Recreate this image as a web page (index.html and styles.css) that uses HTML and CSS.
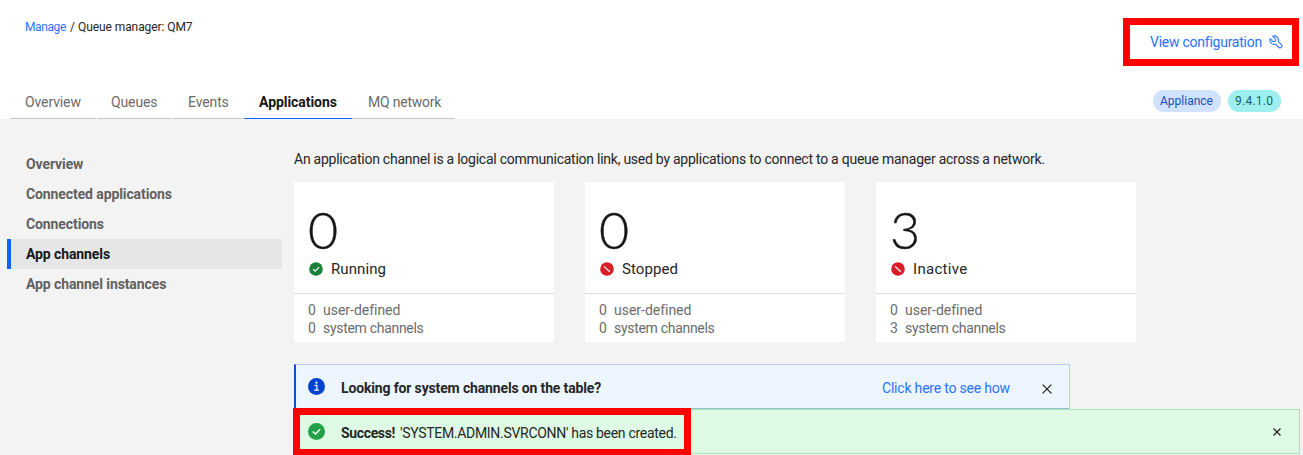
FILE: index.html
```html
<!DOCTYPE html>
<html lang="en">
<head>
<meta charset="utf-8">
<title>Queue manager: QM7</title>
<link rel="stylesheet" href="styles.css">
</head>
<body>
<header class="header">
  <div class="header-top">
    <nav class="breadcrumb"><a class="crumb-link">Manage</a><span class="crumb-sep">/</span><span class="crumb-current">Queue manager: QM7</span></nav>
    <div class="config-box">
      <span class="config-label">View configuration</span>
      <svg class="wrench" viewBox="0 0 32 32" fill="none" stroke="currentColor" stroke-width="2.4" stroke-linejoin="round"><path d="M8.5 2.6 A10 10 0 0 1 21.2 15.2 L28.6 22.4 A4.4 4.4 0 0 1 22.4 28.6 L15.2 21.2 A10 10 0 0 1 2.6 8.5 L8 13.8 A4.1 4.1 0 0 0 13.8 8 Z"/></svg>
    </div>
  </div>
  <div class="header-bottom">
    <nav class="tabs">
      <a class="tab tab-overview">Overview</a>
      <a class="tab tab-queues">Queues</a>
      <a class="tab tab-events">Events</a>
      <a class="tab tab-applications active">Applications</a>
      <a class="tab tab-network">MQ network</a>
    </nav>
    <div class="tags"><span class="tag tag-blue">Appliance</span><span class="tag tag-teal">9.4.1.0</span></div>
  </div>
</header>
<div class="body">
  <nav class="sidebar">
    <a class="side-item s1">Overview</a>
    <a class="side-item s2">Connected applications</a>
    <a class="side-item s3">Connections</a>
    <a class="side-item s4 selected">App channels</a>
    <a class="side-item s5">App channel instances</a>
  </nav>
  <main class="main">
    <p class="intro"><span>An application channel is a logical communication link, used by applications to connect to a queue manager across a network.</span></p>
    <section class="cards">
      <article class="card">
        <div class="card-top">
          <div class="count">0</div>
          <div class="status"><svg class="dot" viewBox="0 0 14 14"><circle cx="7" cy="7" r="6.8" fill="#198038"/><path d="M4 7.1 6.2 9.2 10.1 5.2" fill="none" stroke="#fff" stroke-width="1.2"/></svg><span class="st-running">Running</span></div>
        </div>
        <div class="card-bottom"><div><b>0</b><span class="ud">user-defined</span></div><div><b>0</b><span class="sc">system channels</span></div></div>
      </article>
      <article class="card">
        <div class="card-top">
          <div class="count">0</div>
          <div class="status"><svg class="dot" viewBox="0 0 14 14"><circle cx="7" cy="7" r="6.8" fill="#da1e28"/><path d="M4 4.4 9.8 9.8" stroke="#fff" stroke-width="1.2"/></svg><span class="st-stopped">Stopped</span></div>
        </div>
        <div class="card-bottom"><div><b>0</b><span class="ud">user-defined</span></div><div><b>0</b><span class="sc">system channels</span></div></div>
      </article>
      <article class="card">
        <div class="card-top">
          <div class="count">3</div>
          <div class="status"><svg class="dot" viewBox="0 0 14 14"><circle cx="7" cy="7" r="6.8" fill="#da1e28"/><path d="M4 4.4 9.8 9.8" stroke="#fff" stroke-width="1.2"/></svg><span class="st-inactive">Inactive</span></div>
        </div>
        <div class="card-bottom"><div><b>0</b><span class="ud">user-defined</span></div><div><b>3</b><span class="sc">system channels</span></div></div>
      </article>
    </section>
    <section class="notice info">
      <svg class="notice-icon" viewBox="0 0 17 17"><circle cx="8.5" cy="8.5" r="8.5" fill="#0043ce"/><circle cx="8.4" cy="4.7" r="1.1" fill="#fff"/><path d="M6.6 7.4H8.9V12M6.2 12.2H11" fill="none" stroke="#fff" stroke-width="1.2"/></svg>
      <strong class="info-title">Looking for system channels on the table?</strong>
      <a class="info-link">Click here to see how</a>
      <svg class="close close-info" viewBox="0 0 10 10"><path d="M.6.6 9.4 9.4M9.4.6.6 9.4" stroke="#262626" stroke-width="1.3"/></svg>
    </section>
    <section class="notice success">
      <svg class="notice-icon" viewBox="0 0 17 17"><circle cx="8.5" cy="8.5" r="8.5" fill="#24a148"/><path d="M4.8 8.6 7.4 11.1 12.1 6.2" fill="none" stroke="#fff" stroke-width="1.4"/></svg>
      <strong class="ok-title">Success!</strong>
      <span class="ok-text">'SYSTEM.ADMIN.SVRCONN' has been created.</span>
      <svg class="close close-ok" viewBox="0 0 10 10"><path d="M.6.6 9.4 9.4M9.4.6.6 9.4" stroke="#262626" stroke-width="1.6"/></svg>
      <div class="highlight"></div>
    </section>
  </main>
</div>
</body>
</html>
```
FILE: styles.css
```css
* { box-sizing: border-box; }
body {
  margin: 0;
  width: 1303px;
  height: 455px;
  overflow: hidden;
  background: #f3f3f3;
  color: #262626;
  font: 14px/18px Roboto, "Liberation Sans", sans-serif;
  white-space: nowrap;
}
.header { height: 119px; background: #fff; display: flex; flex-direction: column; justify-content: space-between; }
.header-top { display: flex; justify-content: space-between; padding: 18px 4px 0 25px; }
.breadcrumb { display: flex; font-size: 12px; }
.crumb-link { color: #2a72ff; width: 45px; letter-spacing: -.4px; }
.crumb-sep { width: 8px; }
.crumb-current { letter-spacing: -.08px; }
.config-box { width: 176px; height: 48px; border: 7px solid #f00; display: flex; align-items: center; padding-left: 20px; color: #2a72ff; }
.config-label { width: 119px; letter-spacing: -.25px; }
.wrench { width: 14px; height: 14px; }
.header-bottom { display: flex; justify-content: space-between; padding: 0 22px 0 10px; }
.tabs { display: flex; }
.tab { height: 26px; padding: 0 0 0 15px; margin-right: 1px; border-bottom: 1px solid #c6c6c6; color: #6b6b6b; letter-spacing: -.12px; }
.tab-overview { width: 86px; }
.tab-queues { width: 75px; padding-left: 14px; }
.tab-events { width: 70px; }
.tab-applications { width: 108px; margin: 0; }
.tab-network { width: 103px; padding-left: 16px; letter-spacing: -.22px; }
.tab.active { color: #161616; font-weight: 700; border-color: #0f62fe; letter-spacing: -.05px; }
.tags { display: flex; gap: 7px; height: 22px; margin-top: -3px; font-size: 12px; }
.tag { height: 22px; line-height: 23px; border-radius: 11px; padding-left: 7px; }
.tag-blue { width: 68px; background: #d0e2ff; color: #1b4db8; }
.tag-teal { width: 53px; background: #9ef0f0; color: #1b5d5d; letter-spacing: .25px; }
.body { display: flex; height: 336px; }
.sidebar { width: 275px; margin: 30px 12px 0 7px; }
.side-item { display: block; height: 30px; line-height: 30px; padding-left: 19px; color: #616161; font-weight: 700; letter-spacing: -.1px; }
.side-item.selected { background: #e6e6e6; color: #161616; border-left: 4px solid #0f62fe; padding-left: 15px; }
.main { width: 1006px; }
.intro { margin: 31px 0 14px; height: 18px; letter-spacing: -.25px; }
.cards { display: flex; gap: 31px; }
.card { width: 260px; height: 160px; background: #fff; }
.card-top { height: 112px; border-bottom: 1px solid #dcdcdc; padding: 24px 15px 0 14px; }
.count { font-family: Lato, Roboto, sans-serif; font-size: 52px; font-weight: 300; line-height: 46px; height: 53px; color: #161616; -webkit-text-stroke: .4px #161616; }
.status { display: flex; align-items: center; font-size: 15px; height: 20px; padding-left: 1px; }
.dot { width: 14px; height: 14px; margin-right: 8px; }
.st-running { letter-spacing: .1px; }
.st-stopped { letter-spacing: .1px; }
.st-inactive { letter-spacing: .3px; }
.card-bottom { padding: 7px 14px; color: #6b6b6b; line-height: 18px; }
.card-bottom div { display: flex; }
.card-bottom b { font-weight: 400; width: 15px; }
.ud { letter-spacing: -.02px; }
.sc { letter-spacing: -.3px; }
.notice { display: flex; align-items: center; position: relative; }
.info { margin-top: 22px; width: 776px; height: 45px; background: #edf5ff; border: 1px solid #b2ccf2; border-bottom-color: #96c0cb; border-left: 2px solid #0f4fd8; padding-left: 12px; }
.success { width: 1006px; height: 45px; background: #defae5; border: 1px solid #a7e3ba; padding-left: 13px; }
.notice-icon { width: 17px; height: 17px; margin-right: 16px; flex: none; }
.info-title { width: 541px; letter-spacing: -.15px; padding-top: 2px; }
.info-link { color: #2a72ff; width: 160px; letter-spacing: -.2px; padding-top: 2px; }
.close-info { width: 10px; height: 10px; margin-top: 5px; }
.close-ok { width: 8px; height: 8px; margin-left: 596px; }
.ok-title { width: 59px; letter-spacing: -.35px; padding-top: 2px; }
.ok-text { width: 277px; letter-spacing: -.3px; padding-top: 2px; }
.highlight { position: absolute; left: -2px; top: -2px; width: 398px; height: 48px; border: 7px solid #f00; }
```
